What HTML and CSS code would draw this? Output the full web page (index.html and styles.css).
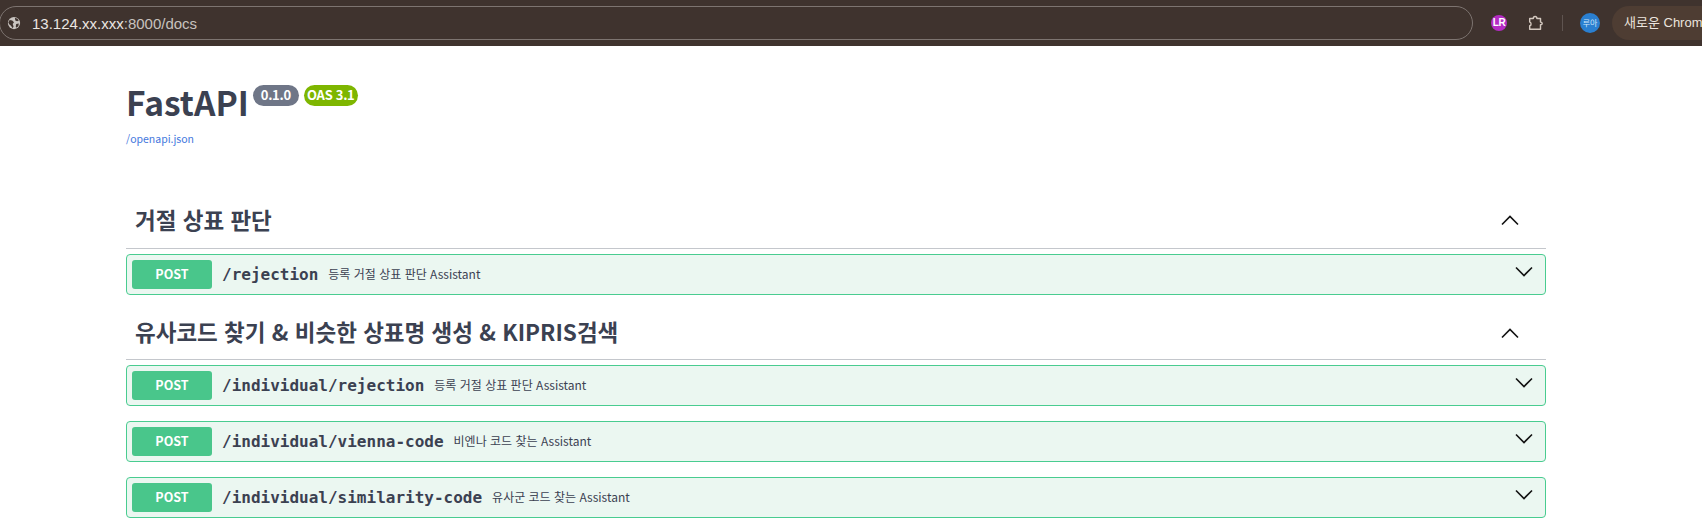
FILE: index.html
```html
<!DOCTYPE html>
<html lang="ko">
<head>
<meta charset="utf-8">
<title>FastAPI - Swagger UI</title>
<link rel="stylesheet" href="styles.css">
</head>
<body>
<header class="chrome">
  <div class="omnibox">
    <svg class="globe" viewBox="0 0 16 16" width="14" height="14"><circle cx="8" cy="8" r="7" fill="#c9c4c0"/><path d="M3 4.500l3 .5 2 2-1.500 2 1 3-1 2-2-3-2-1.500-1-2zM9 2l3 1 1.500 2-2 1-2-1zM10.500 9l3-.5-.5 3-2 2-1-1.500z" fill="#3f332e"/></svg>
    <span class="url"><span class="url-host">13.124.xx.xxx</span>:8000/docs</span>
  </div>
  <div class="ext-lr">LR</div>
  <svg class="puzzle" viewBox="0 0 20 20" width="18" height="18"><path d="M3 5h4c0-3 4-3 4 0h4v4c2.500 0 2.500 3 0 3v5H3v-4c2 0 2-4 0-4z" fill="none" stroke="#d3c8bf" stroke-width="1.600" stroke-linejoin="round"/></svg>
  <div class="divider"></div>
  <div class="avatar">루아</div>
  <div class="update">새로운 Chrome</div>
</header>

<main class="swagger">
  <section class="info">
    <div class="title-row">
      <h1 class="title">FastAPI</h1>
      <span class="badge badge-version">0.1.0</span>
      <span class="badge badge-oas">OAS 3.1</span>
    </div>
    <a class="spec-link" href="#">/openapi.json</a>
  </section>

  <section class="tag tag-first">
    <div class="tag-head">
      <h2 class="tag-name">거절 상표 판단</h2>
      <svg class="arrow" viewBox="0 0 20 20" width="20" height="20"><path d="M2 14.500 10 6.500l8 8" fill="none" stroke="#111" stroke-width="1.600"/></svg>
    </div>
    <div class="op">
      <span class="method">POST</span>
      <span class="path">/rejection</span>
      <span class="desc">등록 거절 상표 판단 Assistant</span>
      <svg class="arrow" viewBox="0 0 20 20" width="20" height="20"><path d="M2 5.500l8 8 8-8" fill="none" stroke="#111" stroke-width="1.600"/></svg>
    </div>
  </section>

  <section class="tag tag-second">
    <div class="tag-head">
      <h2 class="tag-name">유사코드 찾기 &amp; 비슷한 상표명 생성 &amp; KIPRIS검색</h2>
      <svg class="arrow" viewBox="0 0 20 20" width="20" height="20"><path d="M2 14.500 10 6.500l8 8" fill="none" stroke="#111" stroke-width="1.600"/></svg>
    </div>
    <div class="op">
      <span class="method">POST</span>
      <span class="path">/individual/rejection</span>
      <span class="desc">등록 거절 상표 판단 Assistant</span>
      <svg class="arrow" viewBox="0 0 20 20" width="20" height="20"><path d="M2 5.500l8 8 8-8" fill="none" stroke="#111" stroke-width="1.600"/></svg>
    </div>
    <div class="op">
      <span class="method">POST</span>
      <span class="path">/individual/vienna-code</span>
      <span class="desc">비엔나 코드 찾는 Assistant</span>
      <svg class="arrow" viewBox="0 0 20 20" width="20" height="20"><path d="M2 5.500l8 8 8-8" fill="none" stroke="#111" stroke-width="1.600"/></svg>
    </div>
    <div class="op">
      <span class="method">POST</span>
      <span class="path">/individual/similarity-code</span>
      <span class="desc">유사군 코드 찾는 Assistant</span>
      <svg class="arrow" viewBox="0 0 20 20" width="20" height="20"><path d="M2 5.500l8 8 8-8" fill="none" stroke="#111" stroke-width="1.600"/></svg>
    </div>
  </section>
</main>
</body>
</html>
```
FILE: styles.css
```css
* { box-sizing: border-box; }
html, body { margin: 0; height: 522px; overflow: hidden; background: #fff; }
body { font-family: "Noto Sans CJK KR", "Noto Sans", sans-serif; color: #3b4151; }

.chrome {
  height: 46px;
  background: #3f332e;
  display: flex;
  align-items: center;
  overflow: hidden;
  white-space: nowrap;
}
.omnibox {
  width: 1474px;
  height: 34px;
  margin-left: -1px;
  border: 1px solid #7d7470;
  border-radius: 17px;
  display: flex;
  align-items: center;
  padding-left: 7px;
  flex-shrink: 0;
}
.globe { margin-right: 11px; flex-shrink: 0; }
.url { font: 15px "Liberation Sans", sans-serif; color: #c8c2be; }
.url-host { color: #ebe6e2; }
.ext-lr {
  width: 16px;
  height: 16px;
  margin-left: 18px;
  border-radius: 50%;
  background: #b42bc4;
  color: #fff;
  font: 700 10px/16px "Liberation Sans", sans-serif;
  letter-spacing: -0.5px;
  text-align: center;
  flex-shrink: 0;
}
.puzzle { margin-left: 20px; flex-shrink: 0; }
.divider { width: 1px; height: 16px; background: #5f5450; margin-left: 17px; flex-shrink: 0; }
.avatar {
  width: 20px;
  height: 20px;
  margin-left: 17px;
  border-radius: 50%;
  background: #2a7fd0;
  color: #cfe4f7;
  font: 8px/20px "Noto Sans CJK KR", sans-serif;
  text-align: center;
  flex-shrink: 0;
}
.update {
  height: 34px;
  margin-left: 12px;
  padding: 0 16px 0 12px;
  border-radius: 17px 0 0 17px;
  background: #4e3d33;
  color: #ebe4de;
  font: 13px/34px "Liberation Sans", "Noto Sans CJK KR", sans-serif;
  flex-grow: 1;
}

.swagger { width: 1420px; margin-left: 126px; }

.info { padding-top: 31px; height: 141px; }
.title-row { display: flex; align-items: flex-start; height: 54px; }
.title { margin: 0; font-size: 33.5px; line-height: 50px; font-weight: 700; color: #3b4151; }
.badge {
  height: 21px;
  margin-top: 8px;
  border-radius: 11px;
  color: #fff;
  font-size: 13px;
  letter-spacing: -0.3px;
  font-weight: 700;
  line-height: 19px;
  text-align: center;
}
.badge-version { width: 46px; margin-left: 4px; background: #6f7687; }
.badge-oas { width: 54px; margin-left: 5px; background: #7eb600; white-space: nowrap; }
.spec-link {
  display: block;
  font-size: 10.5px;
  line-height: 16px;
  color: #4477dd;
  text-decoration: none;
}

.tag-first { margin-bottom: 3px; }
.tag-head {
  height: 62px;
  padding: 3px 26px 0 9px;
  border-bottom: 1px solid #c4c7cc;
  display: flex;
  align-items: center;
  justify-content: space-between;
}
.tag-second .tag-head { padding-top: 5px; }
.tag-name { margin: 0; font-size: 22.5px; line-height: 32px; font-weight: 700; color: #3b4151; }
.tag-head .arrow { margin-top: 1px; }
.tag-second .tag-head .arrow { margin-top: 3px; }

.op {
  height: 41px;
  margin-top: 5px;
  margin-bottom: 15px;
  padding: 0 11px 0 5px;
  border: 1px solid #49cc90;
  border-radius: 4px;
  background: #ebf7f1;
  display: flex;
  align-items: center;
}
.op .arrow { margin-bottom: 6px; }
.tag-first .op { margin-bottom: 0; }
.method {
  width: 80px;
  height: 29px;
  border-radius: 3px;
  background: #49c68b;
  color: #fff;
  font-size: 12.5px;
  font-weight: 700;
  line-height: 27px;
  text-align: center;
  flex-shrink: 0;
}
.path {
  margin-left: 10px;
  font: 700 16px "DejaVu Sans Mono", monospace;
  color: #3b4151;
}
.desc { margin: 0 0 2px 10px; font-size: 12px; color: #3b4151; flex-grow: 1; }
```
